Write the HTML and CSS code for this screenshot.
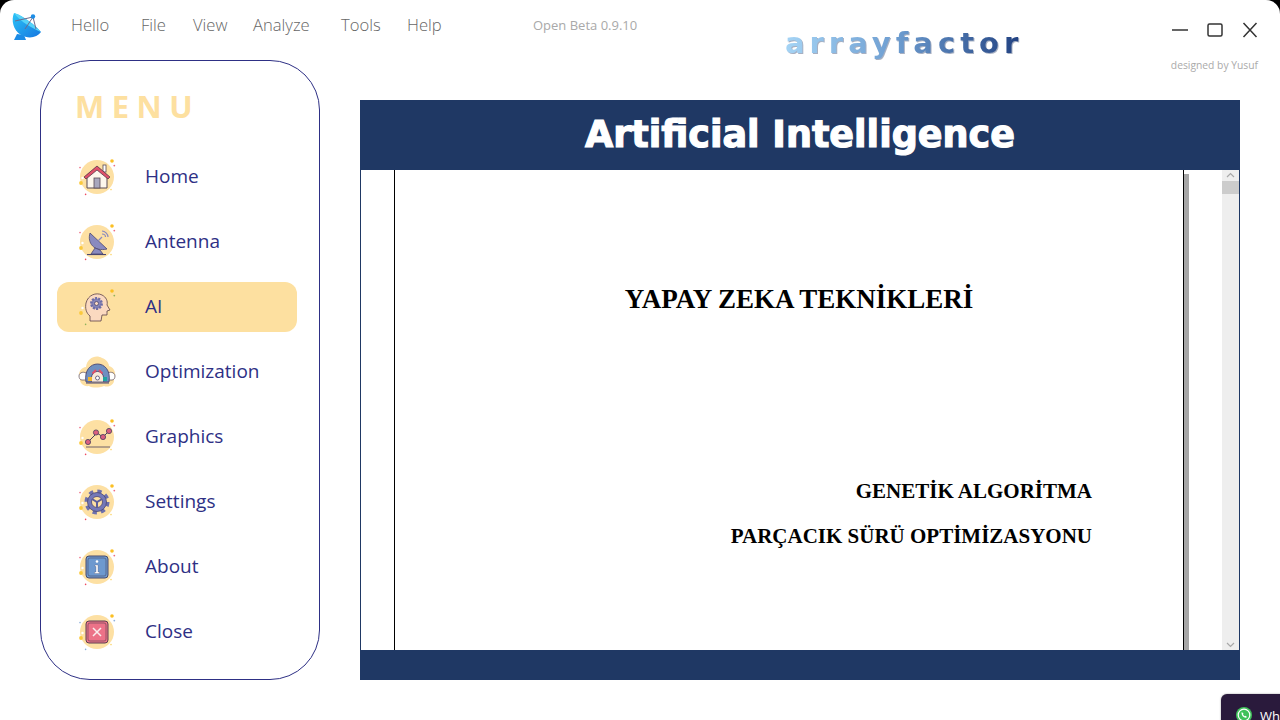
FILE: index.html
```html
<!DOCTYPE html>
<html lang="en">
<head>
    <meta charset="UTF-8">
    <title>arrayfactor</title>
    <link rel="stylesheet" href="styles.css">
</head>
<body>
    <svg class="defs" width="0" height="0">
        <symbol id="spark-pink" viewBox="0 0 40 40">
            <circle cx="20" cy="20" r="17" fill="#fde0a3"/>
            <circle cx="35" cy="4" r="1.8" fill="#fbbf24"/>
            <circle cx="37.3" cy="8.6" r="0.9" fill="#ee6a80"/>
            <circle cx="3" cy="10.6" r="0.8" fill="#ee6a80"/>
            <circle cx="4" cy="26" r="1.9" fill="#fbc93d"/>
            <circle cx="5.5" cy="21" r="1.2" fill="#fff"/>
            <circle cx="8.6" cy="37.4" r="0.8" fill="#ee4a60"/>
            <circle cx="34" cy="32.6" r="0.8" fill="#fbd56b"/>
        </symbol>
        <symbol id="spark-blue" viewBox="0 0 40 40">
            <circle cx="20" cy="20" r="17" fill="#fde0a3"/>
            <circle cx="35" cy="4" r="1.8" fill="#fbbf24"/>
            <circle cx="37.3" cy="8.6" r="0.9" fill="#8fb0dc"/>
            <circle cx="3" cy="10.6" r="0.8" fill="#8fb0dc"/>
            <circle cx="4" cy="26" r="1.9" fill="#fbc93d"/>
            <circle cx="5.5" cy="21" r="1.2" fill="#fff"/>
            <circle cx="8.6" cy="37.4" r="0.8" fill="#8fb0dc"/>
            <circle cx="34" cy="32.6" r="0.8" fill="#fbd56b"/>
        </symbol>
    </svg>

    <div class="window">
        <header class="titlebar">
            <svg class="app-logo" width="32" height="32" viewBox="0 0 32 32">
                <defs>
                    <linearGradient id="dish" x1="0" y1="0" x2="1" y2="1">
                        <stop offset="0" stop-color="#2bc4f7"/>
                        <stop offset="1" stop-color="#1676e0"/>
                    </linearGradient>
                </defs>
                <path d="M7 24 L4 30 H16 L14 25 Z" fill="#1b8be6"/>
                <path d="M4 3 C1 10 3 20 11 25 C18 29 27 28 31 22 C24 14 13 6 4 3 Z" fill="url(#dish)"/>
                <path d="M4 3 C13 6 24 14 31 22 C24 19 10 12 4 3 Z" fill="#55d2f8"/>
                <path d="M5 11 L23 7 M23 7 L15 19 M23 7 L26 19" stroke="#6d6a8c" stroke-width="1" fill="none"/>
                <circle cx="23" cy="6.500" r="2.200" fill="#1c8de6"/>
            </svg>
            <nav class="menubar">
                <a>Hello</a>
                <a>File</a>
                <a>View</a>
                <a>Analyze</a>
                <a>Tools</a>
                <a>Help</a>
            </nav>
            <div class="version">Open Beta 0.9.10</div>
            <div class="wordmark">arrayfactor</div>
            <div class="window-side">
                <div class="window-btns">
                    <svg width="16" height="16" viewBox="0 0 16 16"><path d="M0 8 H16" stroke="#333" stroke-width="1.600"/></svg>
                    <svg width="16" height="16" viewBox="0 0 16 16"><rect x="1" y="2" width="14" height="12" rx="1.500" fill="none" stroke="#333" stroke-width="1.500"/></svg>
                    <svg width="16" height="16" viewBox="0 0 16 16"><path d="M1.500 1 L14.500 15 M14.500 1 L1.500 15" stroke="#333" stroke-width="1.500"/></svg>
                </div>
                <div class="credit">designed by Yusuf</div>
            </div>
        </header>

        <div class="content">
            <aside class="sidebar">
                <div class="sidebar-title">MENU</div>
                <ul class="side-menu">
                    <li>
                        <svg class="side-icon" viewBox="0 0 40 40">
                            <use href="#spark-pink"/>
                            <path d="M10 18 V31 H30 V18 L20 10 Z" fill="#fdf6ec" stroke="#5a4a55"/>
                            <rect x="26" y="8" width="3" height="7" fill="#fff" stroke="#5a4a55" stroke-width="0.800"/>
                            <path d="M7 20 L20 9 L33 20 L31 22 L20 13 L9 22 Z" fill="#e0506a" stroke="#5a3a4a" stroke-width="0.800"/>
                            <rect x="17" y="21" width="6" height="10" fill="#a9a7bd" stroke="#5a4a55" stroke-width="0.800"/>
                        </svg>
                        <span>Home</span>
                    </li>
                    <li>
                        <svg class="side-icon" viewBox="0 0 40 40">
                            <use href="#spark-pink"/>
                            <path d="M13 11 C10 21 17 30 30 27 Z" fill="#8a8abf" stroke="#4b4670" stroke-width="0.800"/>
                            <path d="M18 26 L14 32 H26 L23 28 Z" fill="#8a8abf" stroke="#4b4670" stroke-width="0.800"/>
                            <path d="M10 32.500 H29" stroke="#4b4670" stroke-width="1.200"/>
                            <path d="M21 19 L25 15 M25 9 C28 9 31 12 31 15 M25 12 C27 12 28.500 13 28.500 15" stroke="#8a8abf" stroke-width="1.200" fill="none"/>
                        </svg>
                        <span>Antenna</span>
                    </li>
                    <li class="active">
                        <svg class="side-icon" viewBox="0 0 40 40">
                            <circle cx="35" cy="4" r="1.800" fill="#fbbf24"/>
                            <circle cx="37.300" cy="8.600" r="0.900" fill="#8fb35a"/>
                            <circle cx="4" cy="26" r="1.900" fill="#fbc93d"/>
                            <circle cx="8.600" cy="37.400" r="0.800" fill="#8fb35a"/>
                            <circle cx="5.500" cy="21" r="1.200" fill="#fff"/>
                            <path d="M13 34 V29 C9 26 8 21 9 16 C11 8 19 5 25 8 C29 10 31 14 30 18 L33 23 L30 24 V28 H25 L24 34 Z" fill="#fbd9c0" stroke="#5a4048" stroke-width="0.800"/>
                            <circle cx="19.500" cy="16.500" r="5.200" fill="#8685b8" stroke="#6d6ca5" stroke-width="2.500" stroke-dasharray="2 1.200"/>
                            <circle cx="19.500" cy="16.500" r="2" fill="#fbd9c0" stroke="#4b4670" stroke-width="0.800"/>
                        </svg>
                        <span>AI</span>
                    </li>
                    <li>
                        <svg class="side-icon" viewBox="0 0 40 40">
                            <path d="M3 26 C0 20 5 15 9 15 C10 6 19 2 25 6 C29 7 32 11 32 14 C37 15 40 22 37 27 C38 33 31 36 27 34 C22 36 15 36 12 34 C7 35 2 31 3 26 Z" fill="#fde0a3"/>
                            <path d="M2 24 C2 20 8 19 10 22 L10 28 H5 C3 28 2 26 2 24 Z M38 24 C38 20 32 19 30 22 L30 28 H35 C37 28 38 26 38 24 Z" fill="#fff" stroke="#5a4a55" stroke-width="0.700"/>
                            <path d="M9 30 C5 6 36 6 32 30 H26.500 C29 16 12 16 14.500 30 Z" fill="#6f8fc0" stroke="#4b4670" stroke-width="0.900"/>
                            <path d="M14.500 30 C12 16 29 16 26.500 30 Z" fill="#f7e8d8" stroke="#4b4670" stroke-width="0.800"/>
                            <path d="M15.500 21.500 L19 18 M22 18 L25.500 21.500" stroke="#e0506a" stroke-width="2"/>
                            <circle cx="20.500" cy="26" r="2" fill="#fff" stroke="#4b4670" stroke-width="0.800"/>
                            <rect x="11" y="25" width="4" height="4" fill="#f1b530"/>
                            <rect x="26" y="25" width="4" height="4" fill="#1fa5a0"/>
                            <path d="M9 31 H32" stroke="#4b4670" stroke-width="1"/>
                        </svg>
                        <span>Optimization</span>
                    </li>
                    <li>
                        <svg class="side-icon" viewBox="0 0 40 40">
                            <use href="#spark-pink"/>
                            <path d="M12 24 L20 16 L26 20 L33 13" stroke="#4a3f5c" fill="none"/>
                            <circle cx="11" cy="25" r="2.600" fill="#db5f80" stroke="#4a3f5c" stroke-width="0.800"/>
                            <circle cx="19" cy="15.500" r="2.600" fill="#db5f80" stroke="#4a3f5c" stroke-width="0.800"/>
                            <circle cx="26" cy="20" r="2.600" fill="#db5f80" stroke="#4a3f5c" stroke-width="0.800"/>
                            <circle cx="32" cy="14" r="2.600" fill="#db5f80" stroke="#4a3f5c" stroke-width="0.800"/>
                            <path d="M9 30 H33" stroke="#4a3f5c" stroke-width="0.800"/>
                        </svg>
                        <span>Graphics</span>
                    </li>
                    <li>
                        <svg class="side-icon" viewBox="0 0 40 40">
                            <use href="#spark-pink"/>
                            <circle cx="20" cy="20" r="10.500" fill="none" stroke="#6d70ad" stroke-width="4" stroke-dasharray="4.200 4.050"/>
                            <circle cx="20" cy="20" r="9.500" fill="#7478b8" stroke="#4b4670" stroke-width="0.800"/>
                            <circle cx="20" cy="20" r="5.500" fill="#fde0a3" stroke="#4b4670" stroke-width="0.800"/>
                            <path d="M15 17 L20 20 L25 17 M20 20 V25.500" stroke="#5d5f9c" stroke-width="2" fill="none"/>
                        </svg>
                        <span>Settings</span>
                    </li>
                    <li>
                        <svg class="side-icon" viewBox="0 0 40 40">
                            <use href="#spark-pink"/>
                            <rect x="9" y="9" width="22" height="22" rx="3" fill="#6d99cf" stroke="#4a4a6a"/>
                            <rect x="11" y="11" width="18" height="18" rx="2" fill="none" stroke="#4a4a6a" stroke-width="0.600"/>
                            <circle cx="20" cy="14.500" r="1.300" fill="#fff"/>
                            <path d="M18 18 H21 V25 H22.500 V26.500 H17.500 V25 H19 V19.500 H18 Z" fill="#fff" stroke="#4a4a6a" stroke-width="0.300"/>
                        </svg>
                        <span>About</span>
                    </li>
                    <li>
                        <svg class="side-icon" viewBox="0 0 40 40">
                            <use href="#spark-blue"/>
                            <rect x="9" y="9" width="22" height="22" rx="3" fill="#ec7288" stroke="#5a3f50"/>
                            <rect x="11" y="11" width="18" height="18" rx="2" fill="none" stroke="#5a3f50" stroke-width="0.600"/>
                            <path d="M16 16 L24 24 M24 16 L16 24" stroke="#fbeeee" stroke-width="1.500"/>
                        </svg>
                        <span>Close</span>
                    </li>
                </ul>
            </aside>

            <main class="panel">
                <h1 class="panel-head">Artificial Intelligence</h1>
                <div class="viewer">
                    <div class="doc-page">
                        <h2>YAPAY ZEKA TEKNİKLERİ</h2>
                        <p>GENETİK ALGORİTMA</p>
                        <p>PARÇACIK SÜRÜ OPTİMİZASYONU</p>
                    </div>
                    <div class="page-shadow"></div>
                    <div class="scrollbar">
                        <svg width="17" height="11" viewBox="0 0 17 11"><path d="M5 7 L8.500 3.500 L12 7" fill="none" stroke="#a8a8a8" stroke-width="1.200"/></svg>
                        <div class="scroll-thumb"></div>
                        <svg class="scroll-down" width="17" height="11" viewBox="0 0 17 11"><path d="M5 4 L8.500 7.500 L12 4" fill="none" stroke="#a8a8a8" stroke-width="1.200"/></svg>
                    </div>
                </div>
                <div class="panel-foot"></div>
            </main>
        </div>

        <div class="toast">
            <svg width="16" height="16" viewBox="0 0 16 16">
                <circle cx="8" cy="8" r="8" fill="#3fc15a"/>
                <circle cx="8" cy="8" r="5.800" fill="none" stroke="#fff" stroke-width="1.200"/>
                <path d="M5.800 5 C5 6.500 6 9 8 10.300 C9 11 10.500 11 11 10 L9.500 8.800 L8.800 9.300 C8 8.800 7.300 8 7 7.200 L7.500 6.500 Z" fill="#fff"/>
            </svg>
            <span>WhatsApp</span>
        </div>
    </div>
</body>
</html>
```

FILE: styles.css
```css
html, body {
    margin: 0;
    height: 100%;
    overflow: hidden;
    background-color: #000;
}
.defs {
    display: block;
    height: 0;
}
.window {
    position: relative;
    width: 1280px;
    height: 720px;
    overflow: hidden;
    background-color: #fff;
    border-radius: 14px 14px 0 0;
    font-family: "Open Sans", "Noto Sans", sans-serif;
}

/* title bar */
.titlebar {
    display: flex;
    height: 60px;
    box-sizing: border-box;
    padding-left: 10px;
}
.app-logo {
    margin-top: 10px;
    flex: none;
}
.menubar {
    display: grid;
    grid-template-columns: 70px 52px 60px 88px 66px 60px;
    margin-left: 29px;
    width: 396px;
    height: 48px;
    align-items: center;
    font-size: 16.6px;
    font-weight: 300;
    color: #666;
}
.version {
    margin-left: 66px;
    padding-top: 16px;
    width: 160px;
    font-size: 13px;
    color: #a9a9a9;
}
.wordmark {
    width: 239px;
    margin-left: 92px;
    margin-top: 25px;
    font-family: "DejaVu Sans", sans-serif;
    font-size: 29px;
    line-height: 36px;
    height: 36px;
    font-weight: bold;
    letter-spacing: 5px;
    white-space: nowrap;
    background: linear-gradient(90deg, #a5d4f5 0%, #6f9fd2 45%, #1f3f7f 100%);
    -webkit-background-clip: text;
    background-clip: text;
    color: transparent;
    filter: drop-shadow(1px 1px 0 rgba(60, 80, 120, 0.45));
}
.window-side {
    margin-left: auto;
    padding-right: 22px;
}
.window-btns {
    display: flex;
    gap: 19px;
    padding-top: 22px;
    justify-content: flex-end;
}
.credit {
    margin-top: 20px;
    font-size: 10.3px;
    color: #aaa;
    text-align: right;
    white-space: nowrap;
}

/* layout below the title bar */
.content {
    display: grid;
    grid-template-columns: 280px 880px;
    column-gap: 40px;
    padding: 0 40px;
    height: 620px;
}

/* side menu */
.sidebar {
    box-sizing: border-box;
    border: 1px solid #2e3085;
    border-radius: 50px;
    padding: 0 16px;
}
.sidebar-title {
    height: 91px;
    padding: 22px 0 0 18px;
    box-sizing: border-box;
    font-size: 31px;
    line-height: 46px;
    font-weight: 700;
    letter-spacing: 7.5px;
    color: #fde0a0;
}
.side-menu {
    list-style: none;
    margin: 0;
    padding: 0;
    display: flex;
    flex-direction: column;
    gap: 15px;
    width: 240px;
}
.side-menu li {
    display: flex;
    align-items: center;
    gap: 28px;
    height: 50px;
    padding-left: 20px;
    border-radius: 12px;
    font-size: 19px;
    color: #2e3085;
}
.side-menu li span {
    margin-top: -3px;
}
.side-menu li.active {
    background-color: #fde0a0;
}
.side-icon {
    width: 40px;
    height: 40px;
    flex: none;
}

/* main panel */
.panel {
    margin-top: 40px;
    display: flex;
    flex-direction: column;
}
.panel-head {
    margin: 0;
    height: 70px;
    flex: none;
    background-color: #1f3864;
    color: #fff;
    text-align: center;
    font-family: "DejaVu Sans", sans-serif;
    font-size: 36.5px;
    line-height: 70px;
    font-weight: bold;
    -webkit-text-stroke: 1.2px #fff;
}
.viewer {
    display: flex;
    flex: 1;
    min-height: 0;
    padding-left: 33px;
    border-left: 1px solid #1f3864;
    border-right: 1px solid #1f3864;
}
.doc-page {
    flex: none;
    border-left: 1px solid #000;
    border-right: 1px solid #000;
    font-family: "Liberation Serif", serif;
    font-weight: bold;
    color: #000;
    text-align: right;
    padding-right: 91px;
    width: 697px;
}
.doc-page h2 {
    margin: 111px 0 162px;
    font-size: 27px;
    line-height: 36px;
    text-align: center;
    padding-left: 111px;
}
.doc-page p {
    margin: 0 0 20px;
    font-size: 21px;
    line-height: 25px;
}
.page-shadow {
    width: 5px;
    margin-top: 4px;
    background-color: #a6a6a6;
    flex: none;
}
.scrollbar {
    width: 17px;
    margin-left: auto;
    background-color: #eee;
    display: flex;
    flex-direction: column;
}
.scrollbar svg {
    flex: none;
}
.scroll-thumb {
    height: 13px;
    background-color: #ccc;
}
.scroll-down {
    margin-top: auto;
}
.panel-foot {
    height: 30px;
    flex: none;
    background-color: #1f3864;
}

/* notification poking in at the corner */
.toast {
    position: absolute;
    left: 1221px;
    top: 694px;
    width: 200px;
    height: 60px;
    box-sizing: border-box;
    padding: 13px 15px;
    display: flex;
    gap: 8px;
    border-radius: 6px;
    background-color: #2a1a3c;
    color: #fff;
    font-size: 13px;
    box-shadow: 0 0 2px rgba(0, 0, 0, 0.4);
}
```
